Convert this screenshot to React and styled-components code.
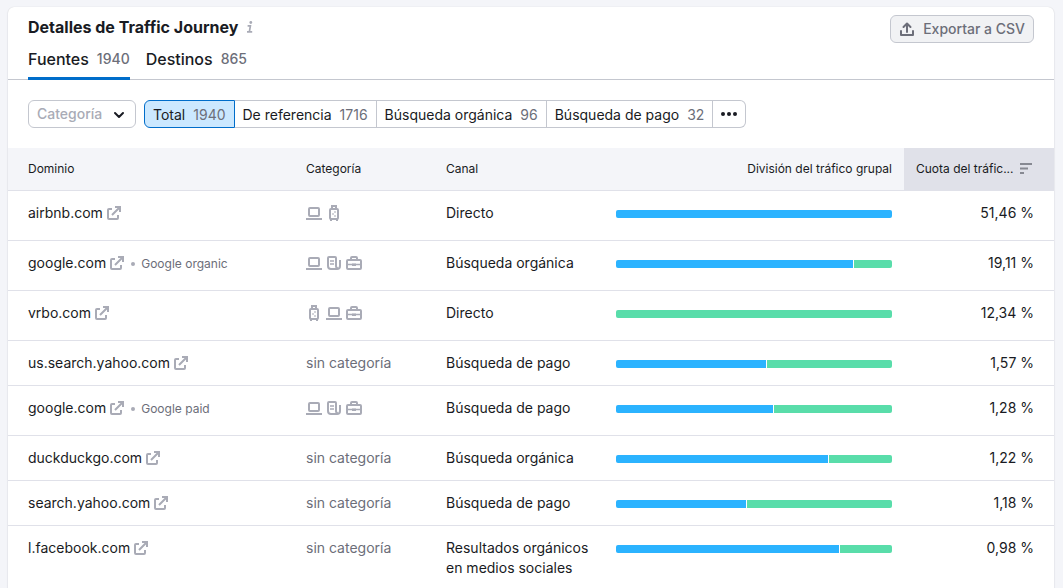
import React, { useState } from 'react';
import styled, { createGlobalStyle, css } from 'styled-components';

const GlobalStyle = createGlobalStyle`
  * { box-sizing: border-box; }
  html { background: #f4f5f9; }
  body {
    margin: 0;
    color: #191b23;
    font: 14px/20px Inter, "Liberation Sans", sans-serif;
    overflow: hidden;
  }
  button, select { font: inherit; color: inherit; margin: 0; cursor: pointer; }
`;

const Page = styled.main`
  padding: 7px 9px 0 8px;
`;

const Card = styled.section`
  background: #fff;
  border-radius: 6px;
  box-shadow: 0 0 1px rgba(25, 27, 35, 0.16), 0 1px 2px rgba(25, 27, 35, 0.12);
  overflow: hidden;
  min-height: 100vh;
`;

const Header = styled.header`
  display: flex;
  justify-content: space-between;
  align-items: flex-start;
  padding: 8px 20px 0;
`;

const Title = styled.h1`
  display: flex;
  align-items: center;
  gap: 4px;
  margin: 0;
  font-size: 16px;
  line-height: 24px;
  font-weight: 700;
`;

const ExportButton = styled.button`
  display: flex;
  align-items: center;
  gap: 8px;
  height: 28px;
  padding: 0 8px;
  border: 1px solid #c4c7cf;
  border-radius: 6px;
  background: #f1f2f4;
  color: #6c6e79;
  font-weight: 500;
`;

const Tabs = styled.div`
  display: flex;
  gap: 16px;
  padding: 0 20px;
  height: 37px;
  border-bottom: 1px solid #c4c7cf;
`;

const Tab = styled.button`
  display: flex;
  align-items: center;
  gap: 8px;
  height: 37px;
  padding: 0 0 5px;
  border: 0;
  background: none;
  font-size: 16px;
  font-weight: 500;
  box-shadow: ${(p) => (p.$active ? 'inset 0 -3px #006dca' : 'none')};
`;

const TabCount = styled.span`
  font-size: 14px;
  color: #6c6e79;
`;

const Filters = styled.div`
  display: flex;
  gap: 8px;
  padding: 20px;
`;

const SelectBox = styled.label`
  display: flex;
  align-items: center;
  position: relative;
  svg { position: absolute; right: 9px; pointer-events: none; }
`;

const Select = styled.select`
  appearance: none;
  width: 108px;
  height: 28px;
  padding: 0 24px 0 8px;
  border: 1px solid #c4c7cf;
  border-radius: 6px;
  background: #fff;
  color: #a9abb6;
  font-weight: 500;
`;

const PillGroup = styled.div`
  display: flex;
`;

const Pill = styled.button`
  display: flex;
  align-items: center;
  gap: 8px;
  height: 28px;
  padding: 2px 8px 0;
  border: 1px solid #c4c7cf;
  border-left-width: 0;
  background: #fff;
  white-space: nowrap;
  &:first-child { border-left-width: 1px; border-radius: 6px 0 0 6px; }
  &:last-child { padding-top: 0; border-radius: 0 6px 6px 0; }
  ${(p) => p.$active && css`
    border-color: #006dca;
    background: #cbe8ff;
  `}
`;

const Muted = styled.span`
  color: #6c6e79;
`;

const Table = styled.table`
  width: 100%;
  table-layout: fixed;
  border-collapse: separate;
  border-spacing: 0;
`;

const Col = styled.col`
  width: ${(p) => p.$width};
`;

const HeadCell = styled.th`
  height: 43px;
  padding: 0 12px;
  border-bottom: 1px solid #e0e1e9;
  background: ${(p) => (p.$sorted ? '#e0e1e9' : '#f4f5f9')};
  font-size: 12px;
  line-height: 16px;
  font-weight: 400;
  text-align: ${(p) => p.$align || 'left'};
  &:first-child { padding-left: 20px; }
  &:last-child { padding-right: 20px; }
`;

const SortLabel = styled.span`
  display: flex;
  align-items: center;
  justify-content: space-between;
  white-space: nowrap;
`;

const Cell = styled.td`
  padding: 12px;
  border-bottom: 1px solid #e0e1e9;
  vertical-align: top;
  text-align: ${(p) => p.$align || 'left'};
  &:first-child { padding-left: 20px; }
  &:last-child { padding-right: 20px; }
`;

const Domain = styled.div`
  display: flex;
  align-items: center;
  gap: 4px;
`;

const DomainLink = styled.a`
  display: flex;
  align-items: center;
  gap: 3px;
  color: inherit;
  text-decoration: none;
`;

const Note = styled.span`
  display: flex;
  align-items: center;
  gap: 6px;
  padding: 2px 0 0 2px;
  color: #6c6e79;
  font-size: 12px;
  line-height: 18px;
  &::before {
    content: '';
    width: 4px;
    height: 4px;
    border-radius: 50%;
    background: #a9abb6;
  }
`;

const IconRow = styled.div`
  display: flex;
  gap: 4px;
  height: 25px;
  padding-top: 2px;
  color: #a9abb6;
`;

const Bar = styled.div`
  display: flex;
  gap: 1px;
  height: 8px;
  margin-top: 7px;
  border-radius: 2px;
  overflow: hidden;
`;

const Segment = styled.div`
  background: ${(p) => (p.$kind === 'first' ? '#2bb3ff' : '#59ddaa')};
`;

const Svg = ({ children, size = 16, color = 'currentColor', label }) => (
  <svg width={size} height={size} viewBox="0 0 16 16" fill="none" stroke={color} strokeWidth="2"
    role={label ? 'img' : undefined} aria-label={label} aria-hidden={label ? undefined : true}>
    {children}
  </svg>
);

const InfoIcon = () => (
  <Svg color="#a9abb6">
    <path d="M5.6 6.8h2.8L7.4 12.6M5 12.8h5.2" strokeWidth="1.7" />
    <circle cx="8.8" cy="3.5" r="1.4" fill="#a9abb6" stroke="none" />
  </Svg>
);
const ExportIcon = () => (
  <Svg>
    <path d="M2 10v4h12v-4M8 11V3M4.5 6 8 2.5 11.5 6" strokeLinejoin="round" strokeLinecap="round" />
  </Svg>
);
const ChevronIcon = () => (
  <Svg color="#191b23"><path d="m4 7 4 4 4-4" strokeLinecap="round" strokeLinejoin="round" /></Svg>
);
const MoreIcon = () => (
  <Svg>
    <g fill="#191b23" stroke="none">
      <circle cx="2" cy="8" r="2" /><circle cx="8" cy="8" r="2" /><circle cx="14" cy="8" r="2" />
    </g>
  </Svg>
);
const SortIcon = () => (
  <Svg color="#878992"><path d="M2 3h12M2 7.5h8M2 12h4" strokeLinecap="butt" /></Svg>
);
const ExternalIcon = () => (
  <Svg color="#a9abb6">
    <path d="M6 4H3q-1 0-1 1v8q0 1 1 1h8q1 0 1-1v-3M6 10l7-7" />
    <path d="M9 2h5v5" />
  </Svg>
);

const categoryIcons = {
  laptop: ['Informática', (
    <><rect x="3" y="3" width="10" height="8" rx="1" /><path d="M0 14h16" /></>
  )],
  luggage: ['Viajes', (
    <>
      <rect x="4" y="4" width="8" height="10" rx="1" />
      <path d="M6 4V1h4v3" />
      <path d="M5 14v2M11 14v2" />
      <path d="M6 9h2M8 7h2M8 11h2" strokeWidth="1.2" />
    </>
  )],
  news: ['Noticias', (
    <>
      <path d="M10 11V3q0-1-1-1H3q-1 0-1 1v8q0 3 3 3h6q3 0 3-3V5" />
      <path d="M10 10v1q0 2 2 2.5" />
      <path d="M4 6h4M4 9h4" strokeWidth="1.6" />
    </>
  )],
  briefcase: ['Negocios', (
    <>
      <rect x="1" y="5" width="14" height="9" rx="1" />
      <path d="M5 5V3q0-1 1-1h4q1 0 1 1v2" />
      <path d="M1 9.5h5M10 9.5h5" strokeWidth="1.6" /><path d="M6 9.7h4" strokeWidth="2.6" />
    </>
  )],
};

const rows = [
  { domain: 'airbnb.com', icons: ['laptop', 'luggage'], channel: 'Directo', split: 100, share: '51,46 %' },
  { domain: 'google.com', note: 'Google organic', icons: ['laptop', 'news', 'briefcase'], channel: 'Búsqueda orgánica', split: 86, share: '19,11 %' },
  { domain: 'vrbo.com', icons: ['luggage', 'laptop', 'briefcase'], channel: 'Directo', split: 0, share: '12,34 %' },
  { domain: 'us.search.yahoo.com', channel: 'Búsqueda de pago', split: 54.5, share: '1,57 %' },
  { domain: 'google.com', note: 'Google paid', icons: ['laptop', 'news', 'briefcase'], channel: 'Búsqueda de pago', split: 57, share: '1,28 %' },
  { domain: 'duckduckgo.com', channel: 'Búsqueda orgánica', split: 77, share: '1,22 %' },
  { domain: 'search.yahoo.com', channel: 'Búsqueda de pago', split: 47.3, share: '1,18 %' },
  { domain: 'l.facebook.com', channel: 'Resultados orgánicos en medios sociales', split: 81, share: '0,98 %' },
];

const tabs = [['Fuentes', 1940], ['Destinos', 865]];
const channels = [['Total', 1940], ['De referencia', 1716], ['Búsqueda orgánica', 96], ['Búsqueda de pago', 32]];

function SplitBar({ value }) {
  return (
    <Bar>
      {value > 0 && <Segment $kind="first" style={{ width: `${value}%` }} />}
      {value < 100 && <Segment $kind="second" style={{ width: `${100 - value}%` }} />}
    </Bar>
  );
}

export default function App() {
  const [tab, setTab] = useState('Fuentes');
  const [channel, setChannel] = useState('Total');

  return (
    <Page>
      <GlobalStyle />
      <Card>
        <Header>
          <Title>Detalles de Traffic Journey <InfoIcon /></Title>
          <ExportButton type="button"><ExportIcon />Exportar a CSV</ExportButton>
        </Header>
        <Tabs role="tablist">
          {tabs.map(([name, count]) => (
            <Tab key={name} type="button" role="tab" aria-selected={tab === name} $active={tab === name} onClick={() => setTab(name)}>
              {name}<TabCount>{count}</TabCount>
            </Tab>
          ))}
        </Tabs>
        <Filters>
          <SelectBox>
            <Select aria-label="Categoría" defaultValue="">
              <option value="">Categoría</option>
            </Select>
            <ChevronIcon />
          </SelectBox>
          <PillGroup>
            {channels.map(([name, count]) => (
              <Pill key={name} type="button" aria-pressed={channel === name} $active={channel === name} onClick={() => setChannel(name)}>
                {name}<Muted>{count}</Muted>
              </Pill>
            ))}
            <Pill type="button" aria-label="Más canales"><MoreIcon /></Pill>
          </PillGroup>
        </Filters>
        <Table>
          <colgroup>
            <Col $width="auto" />
            <Col $width="140px" />
            <Col $width="170px" />
            <Col $width="300px" />
            <Col $width="150px" />
          </colgroup>
          <thead>
            <tr>
              <HeadCell>Dominio</HeadCell>
              <HeadCell>Categoría</HeadCell>
              <HeadCell>Canal</HeadCell>
              <HeadCell $align="right">División del tráfico grupal</HeadCell>
              <HeadCell $sorted aria-sort="descending">
                <SortLabel>Cuota del tráfic...<SortIcon /></SortLabel>
              </HeadCell>
            </tr>
          </thead>
          <tbody>
            {rows.map((row, i) => (
              <tr key={i}>
                <Cell>
                  <Domain>
                    <DomainLink href={`#${row.domain}`}>{row.domain}<ExternalIcon /></DomainLink>
                    {row.note && <Note>{row.note}</Note>}
                  </Domain>
                </Cell>
                <Cell>
                  {row.icons ? (
                    <IconRow>
                      {row.icons.map((name) => (
                        <Svg key={name} label={categoryIcons[name][0]}>{categoryIcons[name][1]}</Svg>
                      ))}
                    </IconRow>
                  ) : <Muted>sin categoría</Muted>}
                </Cell>
                <Cell>{row.channel}</Cell>
                <Cell><SplitBar value={row.split} /></Cell>
                <Cell $align="right">{row.share}</Cell>
              </tr>
            ))}
          </tbody>
        </Table>
      </Card>
    </Page>
  );
}
